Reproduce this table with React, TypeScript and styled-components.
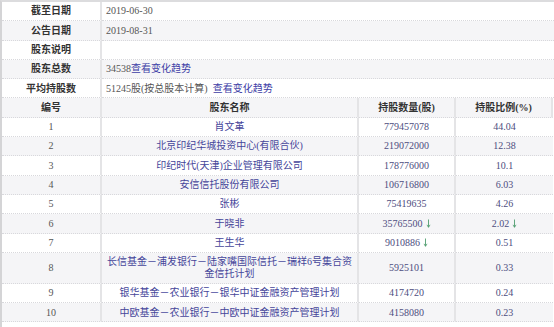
import styled, { createGlobalStyle } from "styled-components";

const GlobalStyle = createGlobalStyle`
  html, body {
    margin: 0;
    padding: 0;
    background: #fff;
  }
  body {
    font-family: "Liberation Serif", "Noto Sans CJK SC", serif;
    font-size: 10px;
  }
`;

const Page = styled.div`
  box-sizing: border-box;
  width: 554px;
  height: 327px;
  border-top: 2px solid #dcdcde;
  border-left: 2px solid #d4d4d6;
  overflow: hidden;
`;

const InfoGrid = styled.div`
  display: grid;
  grid-template-columns: 100px 1fr;
`;

const HolderGrid = styled.div`
  display: grid;
  grid-template-columns: 100px 257px 97px 97px;
`;

const Cell = styled.div<{ $shade?: boolean; $tall?: boolean; $sep?: boolean }>`
  box-sizing: border-box;
  height: ${(p) => (p.$tall ? "31px" : "19.3px")};
  display: flex;
  align-items: center;
  justify-content: center;
  text-align: center;
  background: ${(p) => (p.$shade ? "#f5f5f7" : "#fff")};
  border-bottom: 1px dotted #d8d8dc;
  border-right: ${(p) => (p.$sep ? "2px solid #e4e4e6" : "none")};
  line-height: 11.5px;
  white-space: nowrap;
`;

const Label = styled(Cell)`
  font-weight: bold;
  color: #333;
`;

const Value = styled(Cell)`
  justify-content: flex-start;
  padding-left: 4px;
  color: #555;
`;

const Trend = styled.span<{ $gap?: boolean }>`
  color: #3d3da6;
  margin-left: ${(p) => (p.$gap ? "5px" : "0")};
`;

const Head = styled(Cell)<{ $last?: boolean }>`
  font-weight: bold;
  color: #333;
  border-right: ${(p) => (p.$sep || p.$last ? "2px solid #e4e4e6" : "none")};
`;

const No = styled(Cell)`
  color: #555;
`;

const Name = styled(Cell)`
  color: #45459a;
  white-space: normal;
  padding: 0 3px;
`;

const Num = styled(Cell)`
  color: #4d4d80;
`;

const Down = styled.svg`
  width: 5px;
  height: 9px;
  margin-left: 3px;
`;

const Arrow = () => (
  <Down viewBox="0 0 5 9">
    <path d="M2.5 0.5 V8" stroke="#4f9d6e" strokeWidth="0.9" />
    <path d="M1 5.8 L2.5 8.4 L4 5.8" fill="none" stroke="#4f9d6e" strokeWidth="0.8" />
  </Down>
);

interface Holder {
  no: number;
  name: string;
  shares: string;
  ratio: string;
  sharesDown?: boolean;
  ratioDown?: boolean;
}

const holders: Holder[] = [
  { no: 1, name: "肖文革", shares: "779457078", ratio: "44.04" },
  { no: 2, name: "北京印纪华城投资中心(有限合伙)", shares: "219072000", ratio: "12.38" },
  { no: 3, name: "印纪时代(天津)企业管理有限公司", shares: "178776000", ratio: "10.1" },
  { no: 4, name: "安信信托股份有限公司", shares: "106716800", ratio: "6.03" },
  { no: 5, name: "张彬", shares: "75419635", ratio: "4.26" },
  { no: 6, name: "于晓非", shares: "35765500", ratio: "2.02", sharesDown: true, ratioDown: true },
  { no: 7, name: "王生华", shares: "9010886", ratio: "0.51", sharesDown: true },
  { no: 8, name: "长信基金－浦发银行－陆家嘴国际信托－瑞祥6号集合资金信托计划", shares: "5925101", ratio: "0.33" },
  { no: 9, name: "银华基金－农业银行－银华中证金融资产管理计划", shares: "4174720", ratio: "0.24" },
  { no: 10, name: "中欧基金－农业银行－中欧中证金融资产管理计划", shares: "4158080", ratio: "0.23" },
];

export default function App() {
  return (
    <Page>
      <GlobalStyle />
      <InfoGrid>
        <Label $sep>截至日期</Label>
        <Value>2019-06-30</Value>
        <Label $sep $shade>公告日期</Label>
        <Value $shade>2019-08-31</Value>
        <Label $sep>股东说明</Label>
        <Value />
        <Label $sep $shade>股东总数</Label>
        <Value $shade>
          34538<Trend>查看变化趋势</Trend>
        </Value>
        <Label $sep>平均持股数</Label>
        <Value>
          51245股(按总股本计算)<Trend $gap>查看变化趋势</Trend>
        </Value>
      </InfoGrid>
      <HolderGrid>
        <Head $sep $shade>编号</Head>
        <Head $sep $shade>股东名称</Head>
        <Head $sep $shade>持股数量(股)</Head>
        <Head $last $shade>持股比例(%)</Head>
        {holders.map((h) => {
          const shade = h.no % 2 === 0;
          const tall = h.name.length > 25;
          return [
            <No key={`n${h.no}`} $sep $shade={shade} $tall={tall}>{h.no}</No>,
            <Name key={`m${h.no}`} $sep $shade={shade} $tall={tall}>{h.name}</Name>,
            <Num key={`s${h.no}`} $sep $shade={shade} $tall={tall}>
              {h.shares}
              {h.sharesDown && <Arrow />}
            </Num>,
            <Num key={`r${h.no}`} $shade={shade} $tall={tall}>
              {h.ratio}
              {h.ratioDown && <Arrow />}
            </Num>,
          ];
        })}
      </HolderGrid>
    </Page>
  );
}
